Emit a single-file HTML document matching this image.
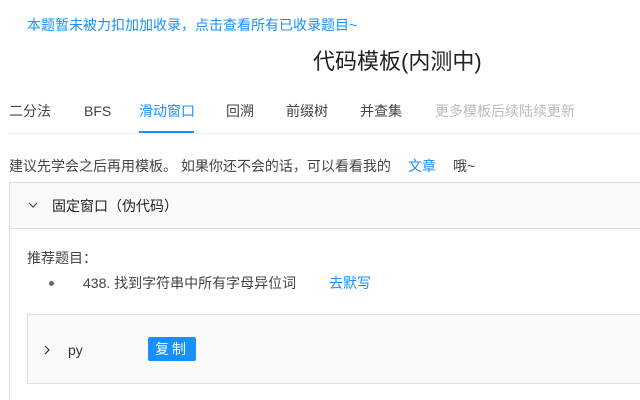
<!DOCTYPE html>
<html style="width:640px;height:400px;overflow:hidden"><head><meta charset="utf-8"><style>
*{margin:0;padding:0;box-sizing:border-box}
body{width:640px;height:400px;overflow:hidden;background:#fff;font-family:"Liberation Sans","Noto Sans CJK SC",sans-serif;color:#333;position:relative}
.a{position:absolute;white-space:nowrap;line-height:1}
.blue{color:#1890ff}
</style></head><body>
<div class="a blue" style="left:27px;top:18px;font-size:14px">本题暂未被力扣加加收录，点击查看所有已收录题目~</div>
<div class="a" style="left:313px;top:51px;font-size:22px;color:#222">代码模板(内测中)</div>
<div class="a" style="left:9px;top:104px;font-size:14px;color:#444">二分法</div>
<div class="a" style="left:84px;top:104px;font-size:14px;color:#444">BFS</div>
<div class="a blue" style="left:139px;top:104px;font-size:14px">滑动窗口</div>
<div class="a" style="left:226px;top:104px;font-size:14px;color:#444">回溯</div>
<div class="a" style="left:286px;top:104px;font-size:14px;color:#444">前缀树</div>
<div class="a" style="left:360px;top:104px;font-size:14px;color:#444">并查集</div>
<div class="a" style="left:435px;top:104px;font-size:14px;color:#bbb">更多模板后续陆续更新</div>
<div style="position:absolute;left:8px;top:133px;width:632px;height:1px;background:#eee"></div>
<div style="position:absolute;left:139px;top:131px;width:55px;height:2px;background:#1890ff"></div>
<div class="a" style="left:9px;top:159px;font-size:14px;color:#444">建议先学会之后再用模板。 如果你还不会的话，可以看看我的</div>
<div class="a blue" style="left:408px;top:159px;font-size:14px">文章</div>
<div class="a" style="left:453px;top:159px;font-size:14px;color:#444">哦~</div>
<div style="position:absolute;left:9px;top:182px;width:640px;height:230px;border-left:1px solid #ddd;border-top:1px solid #ddd"></div>
<div style="position:absolute;left:10px;top:183px;width:640px;height:46px;background:#fafafa;border-bottom:1px solid #ddd"></div>
<svg class="a" style="left:28px;top:202px" width="10" height="7"><path d="M1 1l4 4 4-4" stroke="#444" fill="none" stroke-width="1.2"/></svg>
<div class="a" style="left:52px;top:199px;font-size:14px;color:#222">固定窗口（伪代码）</div>
<div class="a" style="left:27px;top:251px;font-size:14px;color:#444">推荐题目：</div>
<div style="position:absolute;left:49px;top:281px;width:5px;height:5px;border-radius:50%;background:#666"></div>
<div class="a" style="left:83px;top:276px;font-size:14px;color:#444">438. 找到字符串中所有字母异位词</div>
<div class="a blue" style="left:329px;top:276px;font-size:14px">去默写</div>
<div style="position:absolute;left:27px;top:314px;width:620px;height:70px;background:#fafafa;border:1px solid #ddd"></div>
<svg class="a" style="left:44px;top:345px" width="7" height="10"><path d="M1 1l4 4-4 4" stroke="#333" fill="none" stroke-width="1.2"/></svg>
<div class="a" style="left:68px;top:343px;font-size:14px;color:#333">py</div>
<div class="a" style="left:148px;top:337px;width:48px;height:24px;background:#1890ff;color:#fff;font-size:14px;line-height:24px;text-align:center;border-radius:2px;letter-spacing:3px">复制</div>
</body></html>
